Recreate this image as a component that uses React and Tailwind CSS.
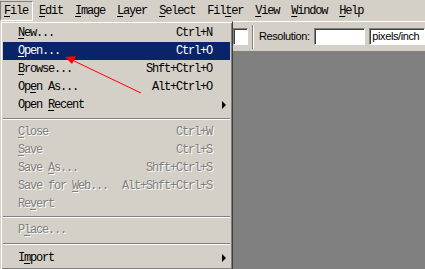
const MENUS = [
  { pre: '', u: 'F', post: 'ile' },
  { pre: '', u: 'E', post: 'dit' },
  { pre: '', u: 'I', post: 'mage' },
  { pre: '', u: 'L', post: 'ayer' },
  { pre: '', u: 'S', post: 'elect' },
  { pre: 'Fil', u: 't', post: 'er' },
  { pre: '', u: 'V', post: 'iew' },
  { pre: '', u: 'W', post: 'indow' },
  { pre: '', u: 'H', post: 'elp' },
]

const ITEMS = [
  { pre: '', u: 'N', post: 'ew...', key: 'Ctrl+N' },
  { pre: '', u: 'O', post: 'pen...', key: 'Ctrl+O', active: true },
  { pre: '', u: 'B', post: 'rowse...', key: 'Shft+Ctrl+O' },
  { pre: 'Op', u: 'e', post: 'n As...', key: 'Alt+Ctrl+O' },
  { pre: 'Open ', u: 'R', post: 'ecent', sub: true },
  { sep: 'h-[9px]' },
  { pre: '', u: 'C', post: 'lose', key: 'Ctrl+W', off: true },
  { pre: '', u: 'S', post: 'ave', key: 'Ctrl+S', off: true },
  { pre: 'Save ', u: 'A', post: 's...', key: 'Shft+Ctrl+S', off: true },
  { pre: 'Save for ', u: 'W', post: 'eb...', key: 'Alt+Shft+Ctrl+S', off: true },
  { pre: 'Re', u: 'v', post: 'ert', off: true },
  { sep: 'h-[8px]' },
  { pre: 'P', u: 'l', post: 'ace...', off: true },
  { sep: 'h-[10px]' },
  { pre: 'I', u: 'm', post: 'port', sub: true },
]

const mono = "font-['Liberation_Mono','Courier_New',monospace] text-[12px] tracking-[-1.2px]"
const sans = "font-['Liberation_Sans',Arial,sans-serif] text-[11px] tracking-[-0.4px]"

function Label({ pre, u, post }) {
  return (
    <span>
      {pre}<span className="underline underline-offset-2">{u}</span>{post}
    </span>
  )
}

function MenuItem({ item }) {
  if (item.sep) {
    return (
      <div className={`${item.sep} flex flex-col justify-center`}>
        <div className="h-[1px] bg-[#808080]" />
        <div className="h-[1px] bg-white" />
      </div>
    )
  }
  const tone = item.active
    ? 'bg-[#0a246a] text-white'
    : item.off
      ? 'text-[#808080] [text-shadow:1px_1px_0_#ffffff]'
      : 'text-black'
  return (
    <div className={`relative h-[18px] flex items-center justify-between pl-[15px] pr-[18px] ${tone}`}>
      <Label {...item} />
      {item.key && <span>{item.key}</span>}
      {item.sub && (
        <svg className="absolute right-[4px] top-[5px]" width="4" height="8" viewBox="0 0 4 8">
          <path d="M0 0 L4 4 L0 8 Z" fill={item.off ? '#808080' : '#000'} />
        </svg>
      )}
    </div>
  )
}

export default function App() {
  return (
    <div className="relative w-[425px] h-[269px] overflow-hidden bg-[#808080] flex flex-col">
      <div className={`h-[21px] bg-[#d4d0c8] flex items-start pt-[1px] ${mono} text-black`}>
        {MENUS.map((m, i) => (
          <div
            key={i}
            className={
              i === 0
                ? 'h-[20px] flex items-center pl-[3px] pr-[4px] border border-t-[#808080] border-l-[#808080] border-b-white border-r-white'
                : 'h-[20px] flex items-center px-[6px]'
            }
          >
            <Label {...m} />
          </div>
        ))}
      </div>

      <div className="h-[31px] bg-[#d4d0c8] border-t border-white border-b border-b-[#808080] flex items-center pl-[233px] text-black">
        <div className="w-[16px] h-[17px] bg-white border border-t-[#808080] border-l-[#808080] border-b-[#ffffff] border-r-[#ffffff] shadow-[inset_1px_1px_0_#404040]" />
        <div className="ml-[4px] h-[24px] w-[2px] border-l border-[#808080] border-r border-r-white" />
        <span className={`ml-[5px] ${sans}`}>Resolution:</span>
        <div className="ml-[4px] w-[56px] h-[17px] bg-white border border-t-[#808080] border-l-[#808080] border-b-white border-r-white shadow-[inset_1px_1px_0_#404040]" />
        <div className={`ml-[4px] w-[60px] h-[17px] bg-white border border-t-[#808080] border-l-[#808080] border-b-white border-r-white shadow-[inset_1px_1px_0_#404040] flex items-center pl-[2px] ${sans}`}>
          pixels/inch
        </div>
      </div>

      <div className="flex-1 bg-[#808080]" />

      <div
        className={`absolute left-0 top-[21px] w-[233px] bg-[#d4d0c8] border border-t-[#d4d0c8] border-l-[#d4d0c8] border-r-[#404040] border-b-[#404040] shadow-[inset_1px_1px_0_#ffffff,inset_-1px_-1px_0_#808080] p-[2px] ${mono}`}
      >
        {ITEMS.map((it, i) => (
          <MenuItem key={i} item={it} />
        ))}
      </div>

      <svg className="absolute left-0 top-0" width="425" height="269" viewBox="0 0 425 269">
        <line x1="141" y1="93" x2="72" y2="60" stroke="#ff0000" strokeWidth="1" />
        <path d="M65 57 L76 56 L72 64 Z" fill="#ff0000" />
      </svg>
    </div>
  )
}
